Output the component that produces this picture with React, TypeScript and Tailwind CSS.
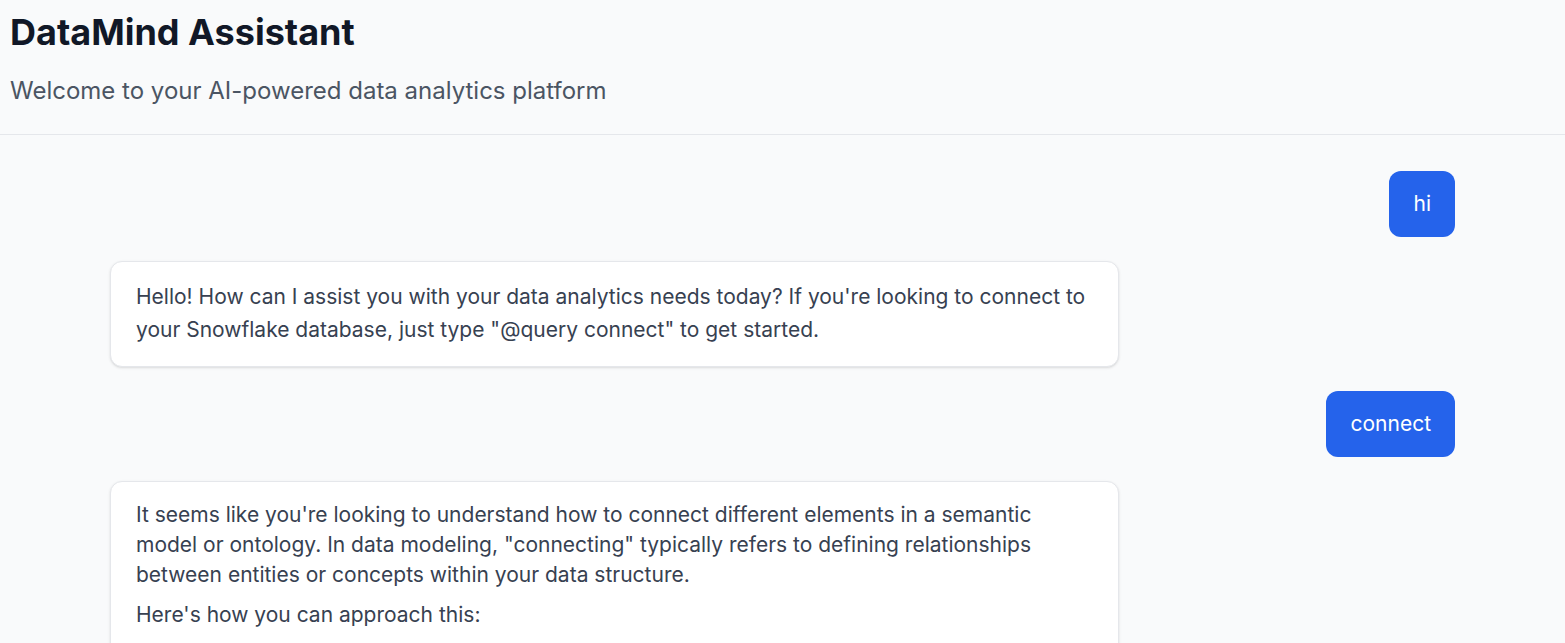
const font = { fontFamily: "Inter, 'Noto Sans', sans-serif" };

function UserBubble({ text }: { text: string }) {
  return (
    <div className="flex justify-end">
      <div className="bg-[#2563eb] text-white rounded-xl px-6 py-[19px] text-[21px] leading-[28px]">
        {text}
      </div>
    </div>
  );
}

export default function App() {
  return (
    <div className="h-screen flex flex-col bg-[#f9fafb] overflow-hidden" style={font}>
      <header className="px-[10px] pt-3 pb-[27px] border-b border-gray-200">
        <h1 className="text-4xl leading-10 font-bold text-[#111827]">DataMind Assistant</h1>
        <p className="mt-[23px] text-2xl leading-8 text-[#4b5563]">
          Welcome to your AI-powered data analytics platform
        </p>
      </header>

      <main className="flex-1 overflow-hidden px-[110px] pt-9 flex flex-col gap-6">
        <UserBubble text="hi" />

        <div className="flex justify-start">
          <div className="max-w-[75%] bg-white border border-gray-200 rounded-xl shadow-sm px-[25px] pt-[18px] pb-[20px] text-[21px] leading-[33px] text-[#374151]">
            Hello! How can I assist you with your data analytics needs today? If you're looking to connect to
            your Snowflake database, just type "@query connect" to get started.
          </div>
        </div>

        <UserBubble text="connect" />

        <div className="flex justify-start">
          <div className="max-w-[75%] min-h-[200px] bg-white border border-gray-200 rounded-xl shadow-sm px-[25px] py-[18px] text-[21px] leading-[30px] text-[#374151]">
            <p>
              It seems like you're looking to understand how to connect different elements in a semantic
              model or ontology. In data modeling, "connecting" typically refers to defining relationships
              between entities or concepts within your data structure.
            </p>
            <p className="mt-[10px]">Here's how you can approach this:</p>
          </div>
        </div>
      </main>
    </div>
  );
}
